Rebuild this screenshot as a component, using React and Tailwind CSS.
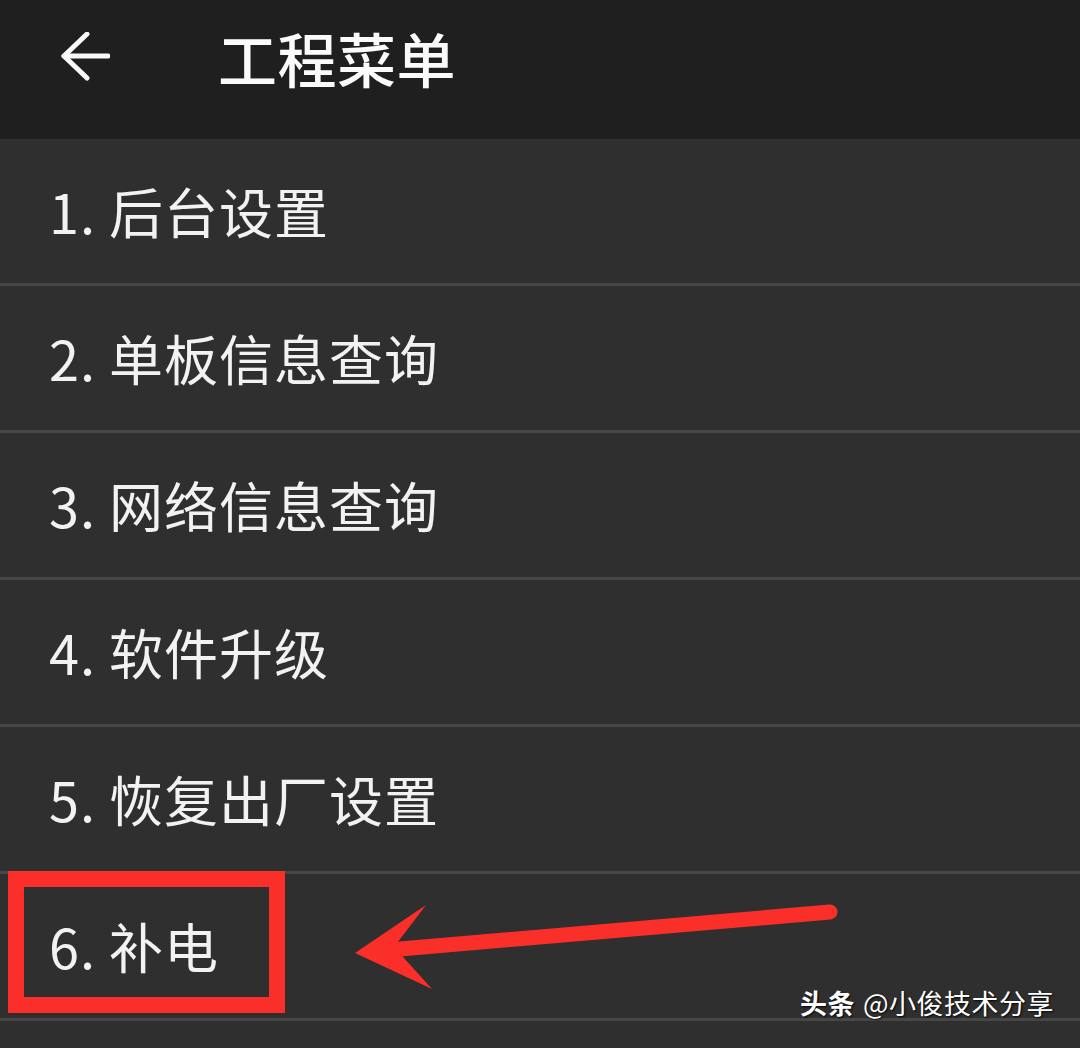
import React from 'react';

const items = [
  '1. 后台设置',
  '2. 单板信息查询',
  '3. 网络信息查询',
  '4. 软件升级',
  '5. 恢复出厂设置',
  '6. 补电',
];

const BackArrow = () => (
  <svg width="50" height="50" viewBox="0 0 50 50" fill="none">
    <path d="M48 24H4" stroke="#fafafa" strokeWidth="5" strokeLinecap="round" />
    <path d="M27 2L4 24L27 46" stroke="#fafafa" strokeWidth="5" strokeLinecap="round" strokeLinejoin="round" />
  </svg>
);

const App = () => {
  return (
    <div
      className="relative w-[1080px] h-[1048px] overflow-hidden bg-[#2f2f2f] text-[#f2f2f2]"
      style={{ fontFamily: '"Noto Sans CJK SC", "Noto Sans", sans-serif' }}
    >
      {/* Header */}
      <div className="h-[139px] bg-[#1f1f1f]">
        <div className="h-[114px] flex items-center">
          <div className="ml-[60px] w-[158px] flex items-center">
            <BackArrow />
          </div>
          <h1 className="text-[59px] font-medium leading-none tracking-[0.5px] text-[#fafafa]">工程菜单</h1>
        </div>
      </div>

      {/* Menu list */}
      <div className="flex flex-col">
        {items.map((label) => (
          <div key={label} className="flex flex-col">
            <div className="h-[144px] flex items-center pl-[49px] text-[54px] leading-none tracking-[1px]">
              {label}
            </div>
            <div className="h-[3px] bg-[#474747]" />
          </div>
        ))}
        <div className="h-[144px]" />
      </div>

      {/* Annotation box */}
      <div className="absolute left-[8px] top-[871px] w-[277px] h-[142px] border-[16px] border-[#fb2f29]" />

      {/* Annotation arrow */}
      <svg className="absolute left-0 top-0" width="1080" height="1048" viewBox="0 0 1080 1048" fill="none">
        <line x1="830" y1="912" x2="400" y2="949" stroke="#fb2f29" strokeWidth="15" strokeLinecap="round" />
        <polygon points="355,953 426,905 394,947 432,989" fill="#fb2f29" />
      </svg>

      {/* Watermark */}
      <div
        className="absolute left-[800px] top-[989px] flex items-center gap-[8px] text-[27px] leading-none tracking-[0.5px] text-white"
        style={{ textShadow: '1px 1px 2px rgba(0,0,0,0.9)' }}
      >
        <span className="font-bold">头条</span>
        <span>@小俊技术分享</span>
      </div>
    </div>
  );
};

export default App;
